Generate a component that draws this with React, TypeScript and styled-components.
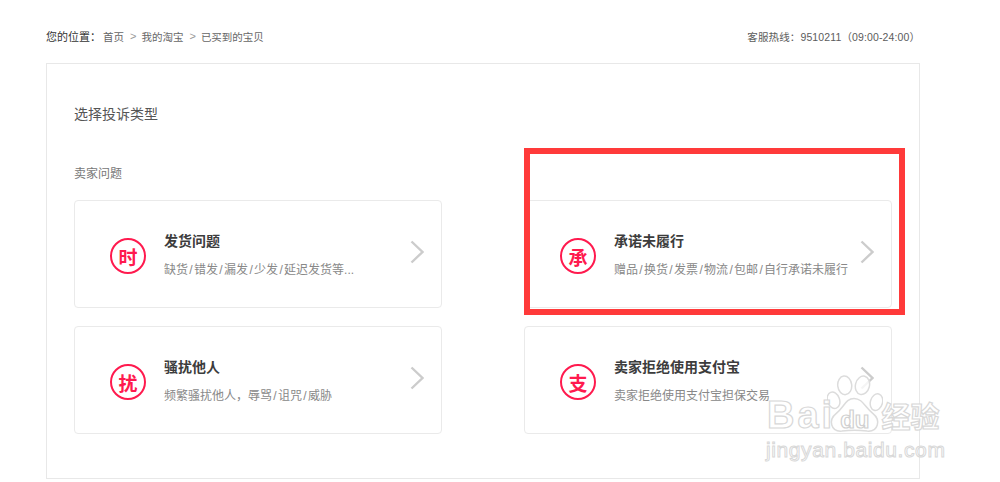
import React from 'react';
import styled, { createGlobalStyle } from 'styled-components';

const GlobalStyle = createGlobalStyle`
  html, body {
    margin: 0;
    padding: 0;
    background: #fff;
    overflow: hidden;
  }
  body {
    font-family: "Liberation Sans", "Noto Sans CJK SC", sans-serif;
  }
`;

// full-width punctuation, as in the page
const COLON = '\uFF1A';
const COMMA = '\uFF0C';
const L_PAREN = '\uFF08';
const R_PAREN = '\uFF09';

const cards = [
  { mark: '时', title: '发货问题', parts: ['缺货', '错发', '漏发', '少发', '延迟发货等...'] },
  { mark: '承', title: '承诺未履行', parts: ['赠品', '换货', '发票', '物流', '包邮', '自行承诺未履行'], highlighted: true },
  { mark: '扰', title: '骚扰他人', parts: [`频繁骚扰他人${COMMA}辱骂`, '诅咒', '威胁'] },
  { mark: '支', title: '卖家拒绝使用支付宝', parts: ['卖家拒绝使用支付宝担保交易'] },
];

export default function App() {
  return (
    <Page>
      <GlobalStyle />
      <TopBar>
        <Crumbs>
          <CrumbLabel>您的位置{COLON}</CrumbLabel>
          <span>首页</span>
          <CrumbArrow>&gt;</CrumbArrow>
          <span>我的淘宝</span>
          <CrumbArrow>&gt;</CrumbArrow>
          <span>已买到的宝贝</span>
        </Crumbs>
        <Hotline>客服热线{COLON}9510211{L_PAREN}09:00-24:00{R_PAREN}</Hotline>
      </TopBar>
      <Panel>
        <Heading>选择投诉类型</Heading>
        <SectionLabel>卖家问题</SectionLabel>
        <CardGrid>
          {cards.map((card) => (
            <Card key={card.mark}>
              <Mark>{card.mark}</Mark>
              <CardText>
                <CardTitle>{card.title}</CardTitle>
                <CardDesc>
                  {card.parts.map((part, i) => (
                    <React.Fragment key={part}>
                      {i > 0 && <Slash>/</Slash>}
                      {part}
                    </React.Fragment>
                  ))}
                </CardDesc>
              </CardText>
              <Chevron viewBox="0 0 14 24">
                <path d="M1.5 1.5 L12.5 12 L1.5 22.5" />
              </Chevron>
              {card.highlighted && <RedFrame />}
            </Card>
          ))}
        </CardGrid>
      </Panel>
      <Watermark>
        <Paw viewBox="0 0 60 62">
          <ellipse cx="19" cy="11" rx="7.5" ry="10" transform="rotate(-6 19 11)" />
          <ellipse cx="38" cy="11" rx="7.5" ry="10" transform="rotate(14 38 11)" />
          <ellipse cx="7" cy="27" rx="6.5" ry="9" transform="rotate(-20 7 27)" />
          <ellipse cx="53" cy="29" rx="6.5" ry="9" transform="rotate(16 53 29)" />
          <path d="M29 25 C38 25 41 35 49 41 C58 48 55 61 43 60 C34 59 25 59 16 60 C4 61 1 48 10 41 C18 35 20 25 29 25 Z" />
        </Paw>
        <BaiduRow>
          <BaiduWord>Bai</BaiduWord>
          <BaiduDu>du</BaiduDu>
          <JingYan>经验</JingYan>
        </BaiduRow>
        <WatermarkUrl>jingyan.baidu.com</WatermarkUrl>
      </Watermark>
    </Page>
  );
}

const Page = styled.div`
  position: relative;
  width: 1000px;
  height: 482px;
  padding: 28px 80px 0 46px;
  box-sizing: border-box;
  overflow: hidden;
`;

const TopBar = styled.div`
  display: flex;
  justify-content: space-between;
  align-items: center;
  height: 16px;
  margin-bottom: 19px;
  font-size: 10.5px;
  color: #666;
`;

const Crumbs = styled.div`
  display: flex;
  align-items: center;
`;

const CrumbLabel = styled.span`
  color: #333;
  font-size: 11px;
  margin-right: 2px;
  width: 55px;
`;

const CrumbArrow = styled.span`
  color: #999;
  font-size: 11px;
  margin: 0 5px 0 6px;
`;

const Hotline = styled.div`
  color: #5c5c5c;
  letter-spacing: 0.12px;
`;

const Panel = styled.div`
  height: 416px;
  box-sizing: border-box;
  border: 1px solid #e8e8e8;
  padding: 40px 27px 0;
`;

const Heading = styled.div`
  font-size: 14px;
  line-height: 20px;
  color: #555;
  margin-bottom: 40px;
`;

const SectionLabel = styled.div`
  font-size: 12px;
  line-height: 20px;
  color: #777;
  margin-bottom: 16px;
`;

const CardGrid = styled.div`
  display: grid;
  grid-template-columns: 368px 368px;
  grid-auto-rows: 108px;
  column-gap: 82px;
  row-gap: 18px;
`;

const Card = styled.div`
  position: relative;
  display: flex;
  align-items: center;
  box-sizing: border-box;
  padding: 0 17px 0 35px;
  border: 1px solid #eaeaea;
  border-radius: 4px;
  background: #fff;
`;

const Mark = styled.div`
  width: 36px;
  height: 36px;
  box-sizing: border-box;
  flex: none;
  display: flex;
  align-items: center;
  justify-content: center;
  margin: 4px 18px 0 0;
  border: 2px solid #ff1a4e;
  border-radius: 50%;
  color: #ff1a4e;
  font-size: 19px;
  font-weight: 700;
`;

const CardText = styled.div`
  flex: 1;
  display: flex;
  flex-direction: column;
  gap: 11px;
  padding-top: 3px;
`;

const CardTitle = styled.div`
  font-size: 14px;
  line-height: 18px;
  font-weight: 700;
  color: #3c3c3c;
`;

const CardDesc = styled.div`
  font-size: 12px;
  line-height: 18px;
  color: #888;
  white-space: nowrap;
`;

const Slash = styled.span`
  display: inline-block;
  width: 6px;
  text-align: center;
`;

const Chevron = styled.svg`
  width: 14px;
  height: 24px;
  flex: none;
  margin-bottom: 4px;
  fill: none;
  stroke: #ccc;
  stroke-width: 2.4;
`;

const RedFrame = styled.div`
  position: absolute;
  left: -1px;
  top: -53px;
  width: 381px;
  height: 167px;
  box-sizing: border-box;
  border: 6px solid #ff3a3a;
  pointer-events: none;
`;

const Watermark = styled.div`
  position: absolute;
  left: 766px;
  top: 374px;
  width: 182px;
  height: 90px;
  color: #fff;
  pointer-events: none;
`;

const Paw = styled.svg`
  position: absolute;
  left: 61px;
  top: 1px;
  width: 56px;
  height: 58px;
  fill: rgba(255, 255, 255, 0.8);
  stroke: #dcdcdc;
  stroke-width: 1.6;
`;

const BaiduRow = styled.div`
  position: absolute;
  left: 1px;
  top: 20px;
  display: flex;
  align-items: baseline;
  font-family: "Liberation Sans", sans-serif;
  font-weight: 700;
`;

const BaiduWord = styled.span`
  font-size: 38px;
  letter-spacing: 3px;
  color: rgba(255, 255, 255, 0.85);
  -webkit-text-stroke: 1.2px #d8d8d8;
`;

const BaiduDu = styled.span`
  margin-left: 5px;
  font-size: 24px;
  color: rgba(255, 255, 255, 0.85);
  -webkit-text-stroke: 1.2px #d0d0d0;
`;

const JingYan = styled.span`
  margin-left: 12px;
  font-size: 29px;
  font-family: "Noto Sans CJK SC", sans-serif;
  color: rgba(255, 255, 255, 0.85);
  -webkit-text-stroke: 1.2px #d8d8d8;
`;

const WatermarkUrl = styled.div`
  position: absolute;
  left: 0;
  top: 64px;
  font-size: 21px;
  line-height: 24px;
  letter-spacing: 0.6px;
  color: rgba(255, 255, 255, 0.85);
  -webkit-text-stroke: 1px #d8d8d8;
  white-space: nowrap;
`;
